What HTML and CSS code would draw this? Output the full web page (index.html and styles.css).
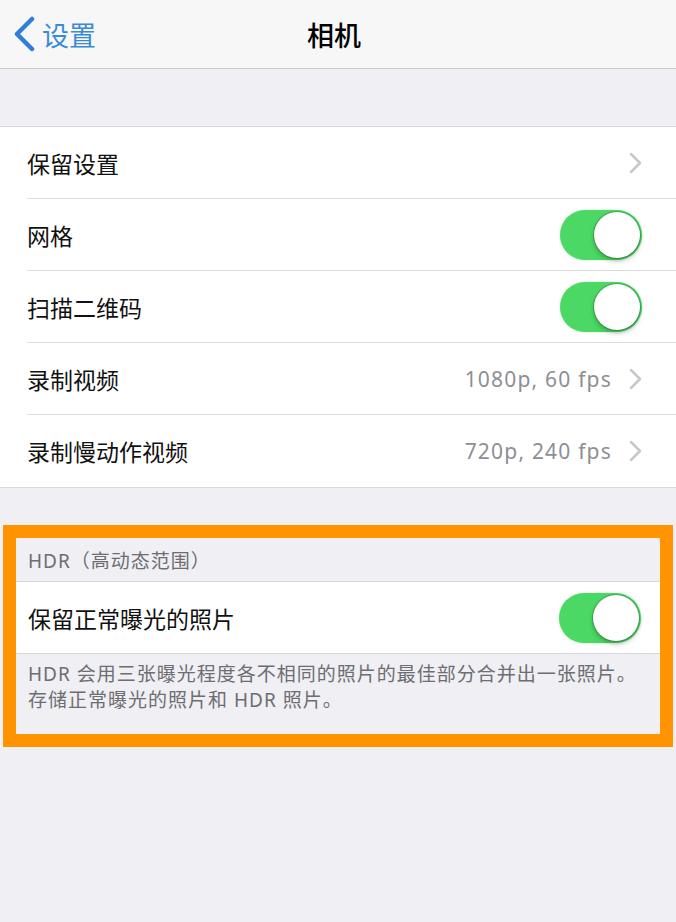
FILE: index.html
```html
<!DOCTYPE html>
<html lang="zh-CN">
<head>
    <meta charset="UTF-8">
    <meta name="viewport" content="width=device-width, initial-scale=1.0">
    <title>相机</title>
    <link rel="stylesheet" href="styles.css">
</head>
<body>

    <!-- Navigation bar -->
    <header class="navbar">
        <a class="nav-back" href="#">
            <svg class="back-icon" width="22" height="36" viewBox="0 0 22 36">
                <path d="M18 3 L3 18 L18 33" fill="none" stroke="#2f7fd9" stroke-width="4.5" stroke-linecap="round" stroke-linejoin="round"/>
            </svg>
            <span>设置</span>
        </a>
        <h1 class="nav-title">相机</h1>
        <div></div>
    </header>

    <!-- Main settings list -->
    <section class="group">
        <div class="cell">
            <span class="cell-label">保留设置</span>
            <div class="cell-accessory">
                <svg class="chevron" width="13" height="22" viewBox="0 0 13 22"><path d="M2 2 L11 11 L2 20" fill="none" stroke="#c7c7cc" stroke-width="2.5" stroke-linecap="round" stroke-linejoin="round"/></svg>
            </div>
        </div>
        <div class="cell">
            <span class="cell-label">网格</span>
            <div class="switch on"><span class="knob"></span></div>
        </div>
        <div class="cell">
            <span class="cell-label">扫描二维码</span>
            <div class="switch on"><span class="knob"></span></div>
        </div>
        <div class="cell">
            <span class="cell-label">录制视频</span>
            <div class="cell-accessory">
                <span class="cell-value">1080p, 60 fps</span>
                <svg class="chevron" width="13" height="22" viewBox="0 0 13 22"><path d="M2 2 L11 11 L2 20" fill="none" stroke="#c7c7cc" stroke-width="2.5" stroke-linecap="round" stroke-linejoin="round"/></svg>
            </div>
        </div>
        <div class="cell">
            <span class="cell-label">录制慢动作视频</span>
            <div class="cell-accessory">
                <span class="cell-value">720p, 240 fps</span>
                <svg class="chevron" width="13" height="22" viewBox="0 0 13 22"><path d="M2 2 L11 11 L2 20" fill="none" stroke="#c7c7cc" stroke-width="2.5" stroke-linecap="round" stroke-linejoin="round"/></svg>
            </div>
        </div>
    </section>

    <!-- HDR section, framed in orange -->
    <div class="highlight">
        <div class="section-header">HDR（高动态范围）</div>
        <section class="group group-inset">
            <div class="cell">
                <span class="cell-label">保留正常曝光的照片</span>
                <div class="switch on"><span class="knob"></span></div>
            </div>
        </section>
        <div class="section-footer">HDR 会用三张曝光程度各不相同的照片的最佳部分合并出一张照片。<br>存储正常曝光的照片和 HDR 照片。</div>
    </div>

</body>
</html>
```

FILE: styles.css
```css
body {
    margin: 0;
    padding: 0;
    background-color: #efeff4;
    font-family: "Noto Sans CJK SC", sans-serif;
    color: #111;
}

/* Top navigation */
.navbar {
    height: 68px;
    display: grid;
    grid-template-columns: 1fr auto 1fr;
    align-items: center;
    background-color: #f7f7f8;
    border-bottom: 1px solid #c9c9cc;
}

.nav-back {
    display: flex;
    align-items: center;
    gap: 6px;
    padding-left: 14px;
    color: #3a8bd6;
    font-size: 27px;
    text-decoration: none;
}

.back-icon {
    display: block;
}

.nav-title {
    margin: 0 0 0 -8px;
    font-size: 27px;
    font-weight: 500;
    color: #000;
}

/* Grouped table */
.group {
    margin-top: 57px;
    background-color: #fff;
    border-top: 1px solid #d8d8dc;
    border-bottom: 1px solid #d8d8dc;
}

.cell {
    position: relative;
    height: 72px;
    display: flex;
    align-items: center;
    justify-content: space-between;
    padding: 0 34px 0 27px;
}

/* inset separator between cells */
.cell + .cell::before {
    content: "";
    position: absolute;
    top: -1px;
    left: 27px;
    right: 0;
    border-top: 1px solid #dcdce0;
}

.cell-label {
    font-size: 23px;
}

.cell-accessory {
    display: flex;
    align-items: center;
    gap: 17px;
}

.cell-value {
    font-family: "Noto Sans", "Noto Sans CJK SC", sans-serif;
    font-size: 21px;
    letter-spacing: 1.2px;
    color: #8e8e93;
}

.chevron {
    display: block;
}

/* Toggle switch */
.switch {
    position: relative;
    width: 82px;
    height: 50px;
    border-radius: 25px;
    background-color: #e5e5ea;
    box-shadow: 0 0 2px rgba(76, 217, 100, 0.5);
}

.switch.on {
    background-color: #4cd864;
}

.knob {
    position: absolute;
    top: 2px;
    right: 2px;
    width: 46px;
    height: 46px;
    border-radius: 50%;
    background-color: #fff;
    box-shadow: 0 0 0 1px rgba(40, 90, 50, 0.35), 0 3px 5px rgba(0, 0, 0, 0.25);
}

/* Orange frame round the HDR section */
.highlight {
    margin: 37px 3px 0;
    border: 13px solid #ff9400;
}

.section-header,
.section-footer {
    font-family: "Noto Sans", "Noto Sans CJK SC", sans-serif;
    font-size: 19px;
    letter-spacing: 1px;
    color: #6d6d72;
    padding-left: 12px;
}

.section-header {
    height: 43px;
    display: flex;
    align-items: center;
}

.group-inset {
    margin-top: 0;
}

.group-inset .cell {
    height: 71px;
    padding: 0 19px 0 12px;
}

.section-footer {
    height: 73px;
    padding-top: 7px;
    line-height: 26px;
    white-space: nowrap;
}
```
